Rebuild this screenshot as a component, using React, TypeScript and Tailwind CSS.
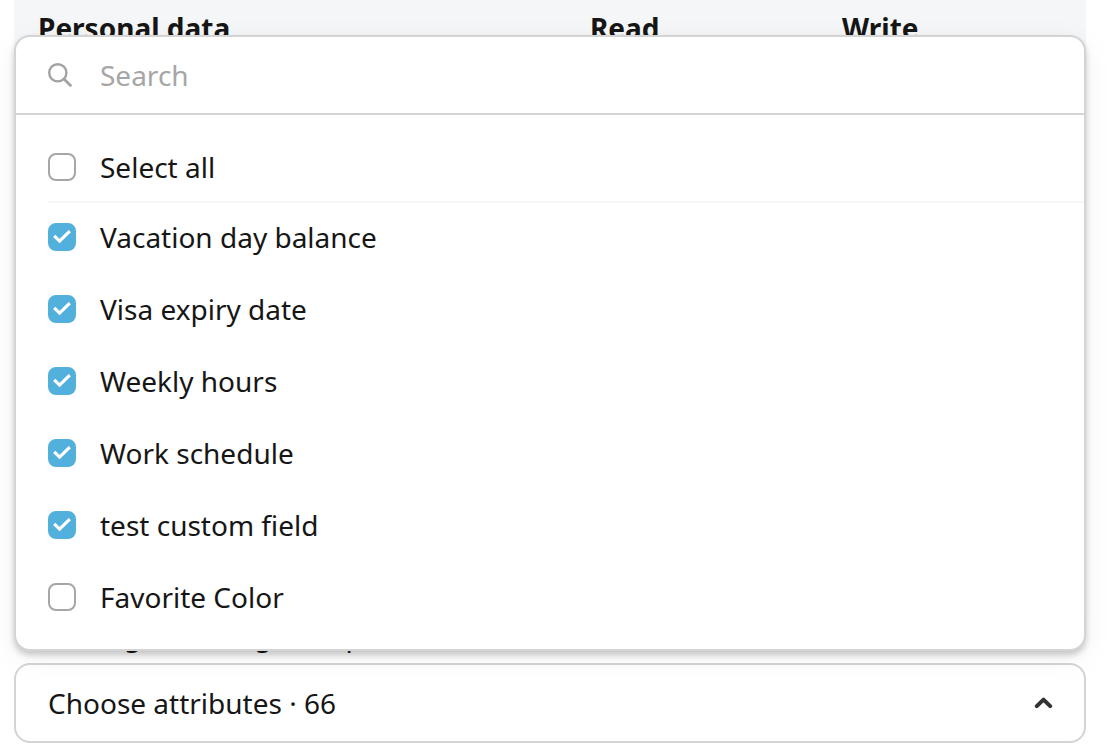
import { useState } from 'react';

const columns = [
  { label: 'Personal data', width: 'w-[552px]' },
  { label: 'Read', width: 'w-[252px]' },
  { label: 'Write', width: '' },
];

const initialAttributes = [
  { id: 'vacation', label: 'Vacation day balance', checked: true },
  { id: 'visa', label: 'Visa expiry date', checked: true },
  { id: 'hours', label: 'Weekly hours', checked: true },
  { id: 'schedule', label: 'Work schedule', checked: true },
  { id: 'custom', label: 'test custom field', checked: true },
  { id: 'color', label: 'Favorite Color', checked: false },
];

interface CheckboxProps {
  id: string;
  checked: boolean;
  onChange: (checked: boolean) => void;
}

function Checkbox({ id, checked, onChange }: CheckboxProps) {
  return (
    <span className="relative size-7 shrink-0">
      <input
        id={id}
        type="checkbox"
        checked={checked}
        onChange={(e) => onChange(e.target.checked)}
        className="peer block size-7 appearance-none rounded-lg border-2 border-[#a6a6a6] bg-white checked:border-[#52b1dc] checked:bg-[#52b1dc]"
      />
      <svg
        viewBox="0 0 28 28"
        fill="none"
        stroke="white"
        strokeWidth="3.2"
        className="pointer-events-none absolute inset-0 hidden size-7 peer-checked:block"
      >
        <path d="M6.2 12.8 11.6 18.1 21.8 8.2" />
      </svg>
    </span>
  );
}

export default function App() {
  const [open, setOpen] = useState(true);
  const [query, setQuery] = useState('');
  const [attributes, setAttributes] = useState(initialAttributes);

  const allChecked = attributes.every((a) => a.checked);
  const visible = attributes.filter((a) => a.label.toLowerCase().includes(query.toLowerCase()));

  const toggle = (id: string, checked: boolean) =>
    setAttributes((list) => list.map((a) => (a.id === id ? { ...a, checked } : a)));

  return (
    <main className="flex min-h-screen flex-col bg-white pr-6 pb-[11px] pl-[14px] font-['Noto_Sans',sans-serif] text-[28px] leading-10 text-[#161616]">
      <table className="w-full table-fixed bg-[#f5f6f8] text-left">
        <thead>
          <tr>
            {columns.map((column) => (
              <th key={column.label} scope="col" className={`${column.width} px-6 pt-2 pb-6 font-bold`}>
                {column.label}
              </th>
            ))}
          </tr>
        </thead>
      </table>

      <p id="attributes-label" className="mt-auto mb-2 px-9">Manage working time plans</p>

      <div className="relative">
        <button
          type="button"
          aria-expanded={open}
          aria-describedby="attributes-label"
          onClick={() => setOpen(!open)}
          className="flex h-20 w-full items-center justify-between rounded-2xl border-2 border-[#d4d4d4] bg-white pr-[30px] pl-8"
        >
          Choose attributes · 66
          <svg
            viewBox="0 0 20 14"
            fill="none"
            stroke="#333"
            strokeWidth="4"
            strokeLinecap="round"
            strokeLinejoin="round"
            className="w-5"
          >
            <path d="M2.8 10.2 9.5 3.6 16.2 10.2" />
          </svg>
        </button>

        {/* Dropdown */}
        {open && (
          <div className="absolute inset-x-0 bottom-full mb-3 overflow-hidden rounded-2xl border-2 border-[#d4d4d4] bg-white shadow-[0_4px_6px_rgba(0,0,0,0.2),0_8px_32px_rgba(0,0,0,0.05)]">
            <div className="flex h-[78px] items-center gap-7 border-b-2 border-[#d4d4d4] px-8">
              <svg viewBox="0 0 24 24" fill="none" stroke="#a3a3a3" strokeWidth="2.4" className="size-6 shrink-0">
                <circle cx="9.8" cy="9.8" r="8.6" />
                <path d="M16 16 23.2 23.2" strokeWidth="2.8" />
              </svg>
              <input
                type="text"
                aria-label="Search"
                placeholder="Search"
                value={query}
                onChange={(e) => setQuery(e.target.value)}
                className="min-w-0 flex-1 outline-none placeholder:text-[#a6a6a6]"
              />
            </div>

            <div className="py-[18px] pl-8">
              <div className="flex h-[70px] items-center gap-6 border-b-2 border-[#f5f5f5]">
                <Checkbox
                  id="select-all"
                  checked={allChecked}
                  onChange={(checked) => setAttributes((list) => list.map((a) => ({ ...a, checked })))}
                />
                <label htmlFor="select-all">Select all</label>
              </div>
              <ul className="flex flex-col gap-1">
                {visible.map((a) => (
                  <li key={a.id} className="flex h-[68px] items-center gap-6">
                    <Checkbox id={a.id} checked={a.checked} onChange={(checked) => toggle(a.id, checked)} />
                    <label htmlFor={a.id}>{a.label}</label>
                  </li>
                ))}
              </ul>
            </div>
          </div>
        )}
      </div>
    </main>
  );
}
